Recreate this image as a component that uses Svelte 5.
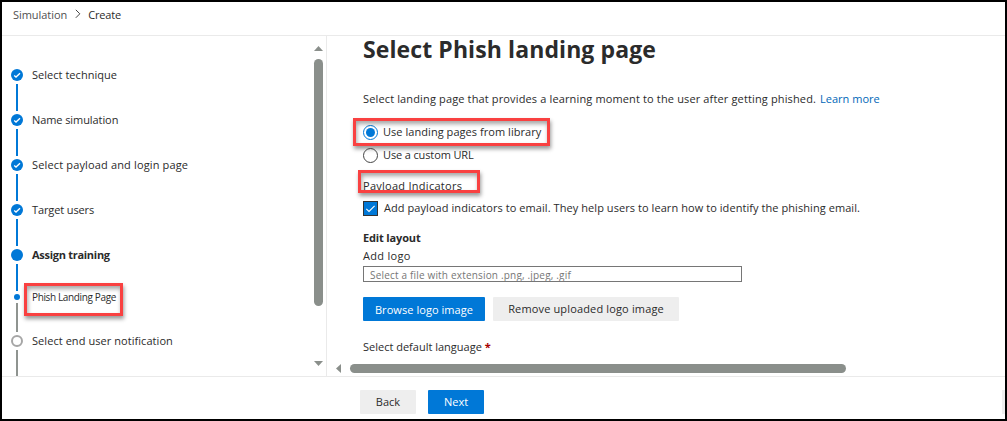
<script>
  const steps = [
    { label: 'Select technique', state: 'done', spacing: 0.03 },
    { label: 'Name simulation', state: 'done', spacing: -0.08 },
    { label: 'Select payload and login page', state: 'done', spacing: 0.15 },
    { label: 'Target users', state: 'done', spacing: -0.12 },
    { label: 'Assign training', state: 'current', spacing: -0.28 },
    { label: 'Phish Landing Page', state: 'sub', spacing: -0.36 },
    { label: 'Select end user notification', state: 'todo', spacing: 0.06 },
  ];
</script>

<div class="window">
  <header>
    <span class="parent">Simulation</span>
    <svg width="6" height="10" viewBox="0 0 6 10"><path d="M.8 .8 4.8 4.8 .8 8.8" fill="none" stroke="#444" stroke-width="1" /></svg>
    <span class="here">Create</span>
  </header>

  <div class="middle">
    <aside>
      <ol>
        {#each steps as step}
          <li class={step.state}>
            <div class="rail">
              <span class="marker">
                {#if step.state === 'done'}
                  <svg width="12" height="12" viewBox="0 0 12 12"><path d="M3.2 6.4 5 8 9 4.2" fill="none" stroke="#fff" stroke-width="1.3" /></svg>
                {/if}
              </span>
              <span class="line"></span>
            </div>
            <span class="label" style="letter-spacing: {step.spacing}px">{step.label}{#if step.state === 'sub'}<i class="callout"></i>{/if}</span>
          </li>
        {/each}
      </ol>
      <div class="vscroll">
        <svg width="9" height="5" viewBox="0 0 9 5"><path d="M0 5 4.5 0 9 5Z" fill="#8a8f8b" /></svg>
        <span class="vthumb"></span>
        <svg width="9" height="5" viewBox="0 0 9 5"><path d="M0 0H9L4.5 5Z" fill="#8a8f8b" /></svg>
      </div>
    </aside>

    <main>
      <div class="content">
        <h1>Select Phish landing page</h1>
        <p class="intro"><span>Select landing page that provides a learning moment to the user after getting phished.</span><a href="#more">Learn more</a></p>
        <div class="option">
          <span class="radio on"></span><span class="lib">Use landing pages from library</span>
          <i class="callout"></i>
        </div>
        <div class="option second"><span class="radio"></span><span class="custom">Use a custom URL</span></div>
        <div class="indicators">Payload Indicators<i class="callout"></i></div>
        <div class="check">
          <span class="box"><svg width="13" height="13" viewBox="0 0 13 13"><path d="M2.3 6.8 5 9.4 10.6 3.8" fill="none" stroke="#fff" stroke-width="1.1" /></svg></span>
          <span>Add payload indicators to email. They help users to learn how to identify the phishing email.</span>
        </div>
        <h2>Edit layout</h2>
        <div class="addlogo">Add logo</div>
        <div class="file">Select a file with extension .png, .jpeg, .gif</div>
        <div class="buttons">
          <button class="primary browse">Browse logo image</button>
          <button class="remove">Remove uploaded logo image</button>
        </div>
        <div class="language">Select default language <b>*</b></div>
      </div>
      <div class="hscroll">
        <svg width="5" height="9" viewBox="0 0 5 9"><path d="M5 0V9L0 4.5Z" fill="#8a8f8b" /></svg>
        <span class="hthumb"></span>
      </div>
    </main>
  </div>

  <footer>
    <button class="back">Back</button>
    <button class="primary next">Next</button>
    <span class="edge"></span>
  </footer>
</div>

<style>
  :global(body) { margin: 0; background: #fff; }
  .window {
    box-sizing: border-box; width: 1007px; height: 421px; overflow: hidden;
    border: 2px solid #000; background: #fff; color: #2b2b2b;
    font: 11px/16px "Open Sans", "Noto Sans", sans-serif;
    display: flex; flex-direction: column; white-space: nowrap;
  }
  svg { display: block; flex: none; }
  header {
    box-sizing: border-box; height: 34px; flex: none; display: flex; align-items: center;
    padding: 0 0 7px 11px; border-bottom: 1px solid #eaeaea;
  }
  header svg { margin: 0 7px 2px 8px; }
  .parent { color: #505050; letter-spacing: -.05px; }
  .here { letter-spacing: -.18px; }
  .middle { display: flex; height: 340px; flex: none; }
  aside {
    box-sizing: border-box; width: 325px; flex: none; display: flex;
    justify-content: space-between; border-right: 1px solid #eaeaea; overflow: hidden;
  }
  ol { list-style: none; margin: 0; padding: 33px 0 0 9px; }
  li { display: flex; height: 45px; gap: 9px; }
  li.sub { height: 41px; }
  .rail { width: 12px; display: flex; flex-direction: column; align-items: center; gap: 3px; flex: none; }
  .marker { box-sizing: border-box; width: 12px; height: 12px; border-radius: 50%; background: #0078d7; flex: none; }
  .sub .marker { width: 6px; height: 6px; }
  .todo .marker { background: #fff; border: 2px solid #a6a6a6; }
  .line { width: 2px; flex: 1; margin-bottom: 3px; background: #0078d7; }
  .sub .line, .todo .line { background: #8f9490; }
  .todo .line { margin-bottom: 0; }
  .label { margin-top: -2px; height: 16px; position: relative; }
  .current .label { font-weight: 700; }
  .sub .label { margin-top: -5px; font-size: 10px; }
  .callout {
    position: absolute; box-sizing: border-box; border: 3px solid #f94141;
    box-shadow: 1px 3px 4px rgba(0, 0, 0, .4), inset 1px 3px 4px rgba(0, 0, 0, .35);
  }
  .sub .callout { left: -8px; top: -6px; width: 99px; height: 33px; }
  .vscroll { width: 9px; padding: 10px 3px 0 0; display: flex; flex-direction: column; }
  .vthumb { height: 247px; margin: 8px 0 55px; border-radius: 5px; background: #8a8f8b; }

  main { flex: 1; min-width: 0; display: flex; flex-direction: column; }
  .content { padding-left: 36px; height: 328px; box-sizing: border-box; }
  h1 { margin: -2px 0 0; font-size: 23px; line-height: 30px; font-weight: 700; letter-spacing: .1px; }
  .intro { margin: 27px 0 0; display: flex; gap: 4px; }
  .intro span { letter-spacing: .14px; }
  a { color: #0067b8; text-decoration: none; }
  .option { position: relative; display: flex; align-items: center; gap: 5px; height: 16px; margin-top: 17px; }
  .option.second { margin-top: 7px; }
  .lib { letter-spacing: .05px; }
  .custom { letter-spacing: -.13px; }
  .radio { box-sizing: border-box; width: 15px; height: 15px; border: 1px solid #444; border-radius: 50%; display: grid; place-items: center; }
  .radio.on { border-color: #0078d7; }
  .radio.on::after { content: ''; width: 9px; height: 9px; border-radius: 50%; background: #0078d7; }
  .option .callout { left: -10px; top: -6px; width: 197px; height: 28px; }
  .indicators { position: relative; margin-top: 15px; width: max-content; letter-spacing: .27px; }
  .indicators .callout { left: -5px; top: -8px; width: 122px; height: 23px; }
  .check { display: flex; align-items: center; gap: 6px; margin-top: 6px; height: 16px; letter-spacing: .065px; }
  .box { box-sizing: border-box; width: 15px; height: 15px; border: 1px solid #333; background: #0078d7; }
  h2 { margin: 14px 0 0; font-size: 11px; line-height: 16px; font-weight: 700; letter-spacing: -.15px; }
  .addlogo { margin-top: 2px; letter-spacing: .3px; }
  .file { box-sizing: border-box; width: 379px; height: 16px; margin-top: 2px; padding: 1px 0 0 6px; border: 1px solid #767676; color: #767676; font-size: 10px; line-height: 15px; letter-spacing: .18px; }
  .buttons { display: flex; gap: 8px; margin-top: 15px; }
  button { box-sizing: border-box; height: 24px; padding: 0; border: 0; border-radius: 1px; background: #eee; color: #2b2b2b; font: inherit; }
  .primary { background: #0078d7; color: #fff; }
  .browse { width: 122px; padding-top: 2px; letter-spacing: .06px; }
  .remove { width: 186px; letter-spacing: .15px; }
  .language { margin-top: 18px; }
  .language b { color: #a80000; }
  .hscroll { display: flex; gap: 9px; padding-left: 9px; }
  .hthumb { width: 496px; height: 9px; border-radius: 5px; background: #8a8f8b; }
  footer { display: flex; gap: 12px; border-top: 1px solid #eaeaea; padding: 13px 0 0 358px; }
  .back { width: 56px; }
  .next { width: 56px; }
  .edge { width: 3px; height: 24px; margin-left: auto; background: #eee; }
</style>
